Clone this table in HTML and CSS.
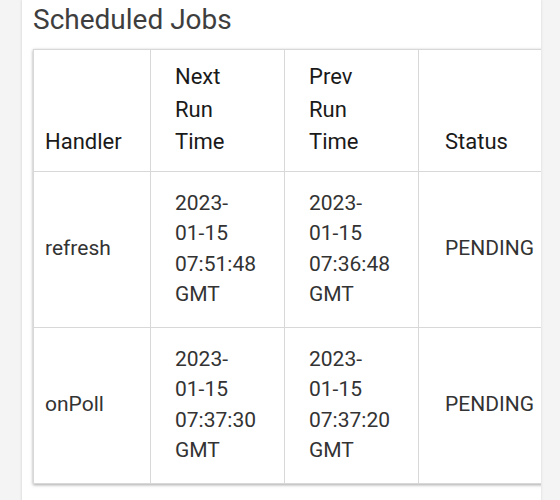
FILE: index.html
```html
<!DOCTYPE html>
<html>
<head>
<meta charset="utf-8">
<link rel="stylesheet" href="styles.css">
</head>
<body>
<div class="page">
  <div class="card">
    <h2 class="title">Scheduled Jobs</h2>
    <div class="table-wrap">
      <table class="jobs">
        <colgroup>
          <col class="c1"><col class="c2"><col class="c3"><col class="c4">
        </colgroup>
        <thead>
          <tr>
            <th>Handler</th>
            <th>Next<br>Run<br>Time</th>
            <th>Prev<br>Run<br>Time</th>
            <th class="st">Status</th>
          </tr>
        </thead>
        <tbody>
          <tr>
            <td>refresh</td>
            <td>2023-<br>01-15<br>07:51:48<br>GMT</td>
            <td>2023-<br>01-15<br>07:36:48<br>GMT</td>
            <td class="st">PENDING</td>
          </tr>
          <tr>
            <td>onPoll</td>
            <td>2023-<br>01-15<br>07:37:30<br>GMT</td>
            <td>2023-<br>01-15<br>07:37:20<br>GMT</td>
            <td class="st">PENDING</td>
          </tr>
        </tbody>
      </table>
    </div>
  </div>
</div>
</body>
</html>
```
FILE: styles.css
```css
html, body {
  margin: 0;
  padding: 0;
  background: #f4f4f4;
}
body {
  font-family: Roboto, "Liberation Sans", sans-serif;
  width: 560px;
  height: 500px;
  overflow: hidden;
}
.page {
  padding-left: 22px;
}
.card {
  width: 519px;
  height: 520px;
  background: #ffffff;
  box-shadow: -1px 0 2px rgba(0,0,0,0.08), 1px 0 2px rgba(0,0,0,0.06);
  padding-left: 11px;
  box-sizing: border-box;
  overflow: hidden;
}
.title {
  margin: 0;
  padding-top: 4px;
  font-size: 28px;
  font-weight: 400;
  line-height: 32px;
  color: #3e3e3e;
  height: 45px;
}
.table-wrap {
  width: 530px;
  padding-bottom: 6px;
}
.jobs {
  border-collapse: collapse;
  table-layout: fixed;
  width: 526px;
  box-shadow: 0 1px 3px rgba(0,0,0,0.35);
  font-size: 21px;
}
.c1 { width: 117px; }
.c2 { width: 134px; }
.c3 { width: 134px; }
.c4 { width: 141px; }
.jobs th,
.jobs td {
  border: 1px solid #d8d8d8;
  text-align: left;
  padding-left: 24px;
  padding-right: 8px;
  white-space: nowrap;
}
.jobs th:first-child,
.jobs td:first-child {
  padding-left: 11px;
}
.jobs .st {
  padding-left: 26px;
}
.jobs th {
  font-weight: 400;
  font-size: 22px;
  color: #1a1a1a;
  line-height: 32.5px;
  padding-top: 11px;
  padding-bottom: 12px;
  vertical-align: bottom;
}
.jobs td {
  color: #333333;
  line-height: 30.5px;
  padding-top: 16px;
  padding-bottom: 17px;
  vertical-align: middle;
}
```
